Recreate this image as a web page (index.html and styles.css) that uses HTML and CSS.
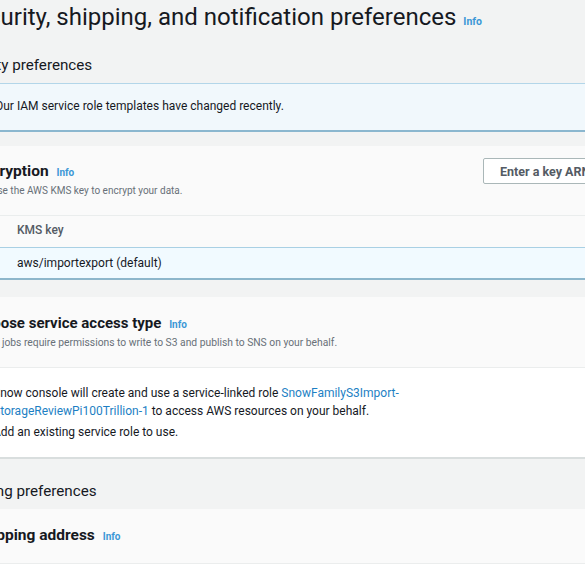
FILE: index.html
```html
<!DOCTYPE html>
<html lang="en">
<head>
<meta charset="utf-8">
<title>Security, shipping, and notification preferences</title>
<link rel="stylesheet" href="styles.css">
</head>
<body>
<div class="page">
  <h1 class="title">Security, shipping, and notification preferences <a class="info info-lg">Info</a></h1>

  <h2 class="section-title">Security preferences</h2>

  <div class="alert">
    <svg class="alert-icon" viewBox="0 0 16 16" width="16" height="16"><circle cx="8" cy="8" r="7" fill="none" stroke="#0073bb" stroke-width="2"/><path d="M8 7v5M8 4v1.5" stroke="#0073bb" stroke-width="2"/></svg>
    <span>Our IAM service role templates have changed recently.</span>
  </div>

  <section class="container">
    <div class="container-header split">
      <div>
        <h3 class="heading">Encryption <a class="info">Info</a></h3>
        <p class="desc">Choose the AWS KMS key to encrypt your data.</p>
      </div>
      <button class="btn">Enter a key ARN</button>
    </div>
    <div class="table">
      <div class="tr th">
        <div class="sel-cell"><span class="divider"></span></div>
        <div class="cell">KMS key</div>
      </div>
      <div class="tr selected">
        <div class="sel-cell"><span class="radio on"></span></div>
        <div class="cell">aws/importexport (default)</div>
      </div>
    </div>
  </section>

  <section class="container">
    <div class="container-header bordered access-header">
      <h3 class="heading heading-sm">Choose service access type <a class="info">Info</a></h3>
      <p class="desc desc-2">Snow jobs require permissions to write to S3 and publish to SNS on your behalf.</p>
    </div>
    <div class="container-body">
      <div class="option">
        <span class="radio on"></span>
        <p>Snow console will create and use a service-linked role <a class="link">SnowFamilyS3Import-<br>StorageReviewPi100Trillion-1</a> to access AWS resources on your behalf.</p>
      </div>
      <div class="option option-2">
        <span class="radio"></span>
        <p>Add an existing service role to use.</p>
      </div>
    </div>
  </section>

  <h2 class="section-title section-title-2">Shipping preferences</h2>

  <section class="container container-last">
    <div class="container-header bordered">
      <h3 class="heading">Shipping address <a class="info">Info</a></h3>
    </div>
    <div class="container-body"></div>
  </section>
</div>
</body>
</html>
```

FILE: styles.css
```css
html, body {
  margin: 0;
  padding: 0;
  background: #f2f3f3;
  overflow: hidden;
}
body {
  font-family: Roboto, "Liberation Sans", Arial, sans-serif;
  color: #16191f;
}
.page {
  margin-left: -46px;
  width: 679px;
}
.title {
  margin: 0 0 0 7px;
  padding-top: 2px;
  font-size: 24px;
  line-height: 30px;
  font-weight: 400;
}
.info {
  color: #3b97d6;
  font-weight: 700;
  font-size: 10px;
  margin-left: 4px;
  text-decoration: none;
}
.info-lg {
  font-size: 10.5px;
  margin-left: 1px;
}
.section-title {
  margin: 18px 0 8px 0;
  font-size: 15.2px;
  line-height: 20px;
  font-weight: 400;
}
.section-title-2 {
  margin: 22px 0 8px 0;
}
.alert {
  display: flex;
  align-items: flex-start;
  gap: 10px;
  background: #f1f8fc;
  border-top: 1px solid #b3d6e9;
  border-bottom: 2px solid #8bb7cf;
  padding: 14px 15px 16px 15px;
  font-size: 12px;
  line-height: 16px;
  color: #16191f;
  margin-bottom: 14px;
}
.alert-icon {
  flex: none;
}
.container {
  background: #fafafa;
  margin-bottom: 17px;
}
.container-header {
  padding: 15px 20px 17px 20px;
}
.container-header.split {
  display: flex;
  justify-content: space-between;
  align-items: flex-start;
}
.container-header.bordered {
  padding: 16px 20px 16px 20px;
  border-bottom: 1px solid #ebeded;
}
.container-header.access-header {
  padding-bottom: 17px;
}
.heading {
  margin: 0;
  font-size: 15.5px;
  line-height: 20px;
  font-weight: 700;
}
.heading-sm {
  font-size: 15px;
}
.desc {
  margin: 1px 0 0 0;
  font-size: 10px;
  line-height: 14px;
  color: #687078;
}
.desc-2 {
  margin-top: 1px;
  font-size: 10.3px;
}
.btn {
  margin-top: -3px;
  height: 26px;
  width: 130px;
  background: #fff;
  border: 1px solid #aab7b8;
  border-radius: 2px;
  font-family: inherit;
  font-size: 12.5px;
  font-weight: 700;
  color: #545b64;
  text-align: left;
  padding: 0 0 0 16px;
}
.table {
  display: flex;
  flex-direction: column;
}
.tr {
  display: flex;
  font-size: 12px;
  line-height: 16px;
}
.th {
  border-top: 1px solid #eaeded;
  padding: 6px 0 7px 0;
  font-weight: 500;
  color: #545b64;
}
.selected {
  background: #f1faff;
  border-top: 1px solid #a9d0e4;
  border-bottom: 2px solid #8db6cb;
  padding: 7px 0;
  color: #16191f;
}
.sel-cell {
  width: 46px;
  flex: none;
  display: flex;
  justify-content: flex-end;
  align-items: center;
}
.divider {
  width: 1px;
  height: 18px;
  background: #d5dbdb;
}
.cell {
  padding-left: 17px;
}
.radio {
  width: 12px;
  height: 12px;
  border-radius: 50%;
  border: 2px solid #aab7b8;
  background: #fff;
  box-sizing: border-box;
  flex: none;
}
.radio.on {
  border: 4px solid #0073bb;
}
.selected .radio {
  margin-right: 18px;
}
.container-body {
  background: #fff;
  padding: 16px 20px 16px 20px;
  border-bottom: 2px solid #d9dede;
}
.container-last .container-body {
  border-bottom: none;
  height: 60px;
}
.option {
  display: flex;
  align-items: flex-start;
  gap: 7px;
  font-size: 12px;
  line-height: 18px;
}
.option .radio {
  margin-top: 3px;
}
.option p {
  margin: 0;
}
.option-2 {
  margin-top: 3px;
}
.link {
  color: #1d7fc4;
  text-decoration: none;
}
```
